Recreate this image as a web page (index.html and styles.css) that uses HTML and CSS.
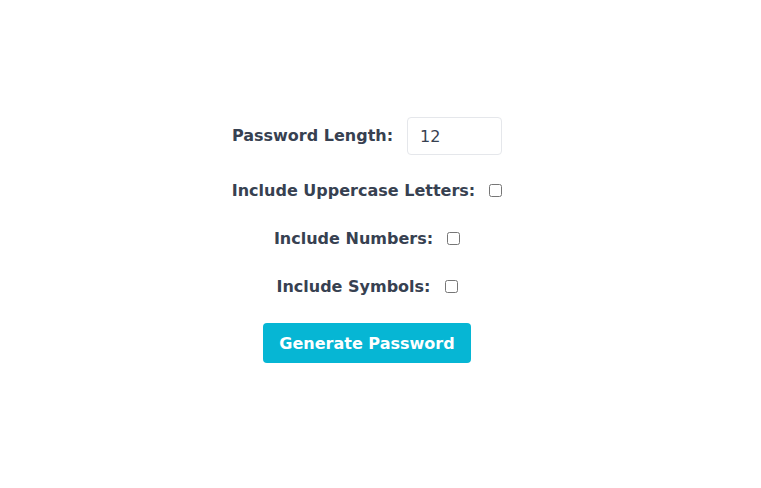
FILE: index.html
```html
<!DOCTYPE html>
<html>
<head>
<meta charset="utf-8">
<link rel="stylesheet" href="styles.css">
</head>
<body>
<div class="page">
  <div class="form">
    <div class="row">
      <label class="label" for="len">Password Length:</label>
      <input class="num" id="len" type="number" value="12">
    </div>
    <div class="row">
      <label class="label" for="up">Include Uppercase Letters:</label>
      <input class="check" id="up" type="checkbox">
    </div>
    <div class="row">
      <label class="label" for="nums">Include Numbers:</label>
      <input class="check" id="nums" type="checkbox">
    </div>
    <div class="row">
      <label class="label" for="sym">Include Symbols:</label>
      <input class="check" id="sym" type="checkbox">
    </div>
    <button class="btn">Generate Password</button>
  </div>
</div>
</body>
</html>
```

FILE: styles.css
```css
html, body {
  margin: 0;
  padding: 0;
  background: #ffffff;
}
body {
  font-family: "DejaVu Sans", sans-serif;
  color: #374151;
}
.page {
  width: 734px;
  height: 488px;
  display: flex;
  align-items: center;
  justify-content: center;
}
.form {
  display: flex;
  flex-direction: column;
  align-items: center;
  gap: 24px;
  margin-top: -8px;
}
.row {
  display: flex;
  align-items: center;
}
.label {
  font-size: 16px;
  font-weight: bold;
  line-height: 24px;
  margin-right: 10px;
}
.num {
  width: 95px;
  height: 38px;
  box-sizing: border-box;
  margin-left: 4px;
  padding: 0 12px;
  border: 1px solid #e5e7eb;
  border-radius: 4px;
  font-family: "DejaVu Sans", sans-serif;
  font-size: 16px;
  color: #374151;
  outline: none;
  -moz-appearance: textfield;
}
.num::-webkit-outer-spin-button,
.num::-webkit-inner-spin-button {
  -webkit-appearance: none;
  margin: 0;
}
.check {
  width: 13px;
  height: 13px;
  margin: 0 0 2px 4px;
}
.btn {
  width: 208px;
  height: 40px;
  border: none;
  border-radius: 4px;
  background: #06b6d4;
  color: #ffffff;
  font-family: "DejaVu Sans", sans-serif;
  font-size: 16px;
  font-weight: bold;
  padding: 0;
}
```
